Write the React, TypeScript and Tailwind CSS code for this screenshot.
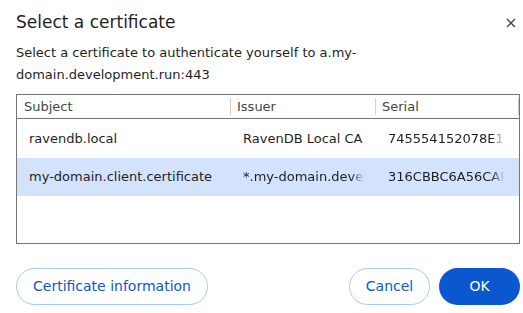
import React from 'react';

const rows = [
  { subject: 'ravendb.local', issuer: 'RavenDB Local CA', serial: '745554152078E19A', selected: false, clipIssuer: false },
  { subject: 'my-domain.client.certificate', issuer: '*.my-domain.development.run', serial: '316CBBC6A56CAF21', selected: true, clipIssuer: true },
];

const fade = 'linear-gradient(to right, black calc(100% - 14px), transparent)';

const App: React.FC = () => {
  return (
    <div className="w-[523px] h-[313px] bg-white text-[#1f1f1f] font-['DejaVu_Sans',sans-serif] overflow-hidden pl-4 pr-[3px]">
      {/* Title */}
      <div className="flex items-start justify-between pt-[10px]">
        <h1 className="text-[17px] leading-6">Select a certificate</h1>
        <svg width="10" height="10" viewBox="0 0 10 10" className="mt-[8px] mr-[4px]">
          <path d="M1 1 L9 9 M9 1 L1 9" stroke="#474747" strokeWidth="1.4" />
        </svg>
      </div>

      {/* Description */}
      <p className="pt-[8px] text-[13px] leading-[22px] text-[#1f1f1f] w-[364px]">
        Select a certificate to authenticate yourself to a.my-domain.development.run:443
      </p>

      {/* Table */}
      <div className="mt-[8px] h-[150px] border border-[#757575] text-[13px] overflow-hidden">
        <div className="flex h-[24px] items-center border-b border-[#757575] text-[#444746]">
          <div className="w-[214px] pl-[7px] border-r border-[#d0d0d0] h-[17px] leading-[17px]">Subject</div>
          <div className="w-[145px] pl-[6px] border-r border-[#d0d0d0] h-[17px] leading-[17px]">Issuer</div>
          <div className="flex-1 pl-[6px] border-r border-[#c4c4c4] h-[17px] leading-[17px]">Serial</div>
        </div>
        {rows.map((r, i) => (
          <div
            key={r.subject}
            className={`flex items-center ${i === 0 ? 'h-[39px]' : 'h-[38px]'} ${r.selected ? 'bg-[#d3e3fd]' : ''}`}
          >
            <div className="w-[214px] pl-[12px] whitespace-nowrap overflow-hidden">{r.subject}</div>
            <div className="w-[145px] pl-[12px]">
              <div
                className="w-[122px] whitespace-nowrap overflow-hidden"
                style={r.clipIssuer ? { maskImage: fade, WebkitMaskImage: fade } : undefined}
              >
                {r.issuer}
              </div>
            </div>
            <div className="flex-1 pl-[12px]">
              <div
                className="w-[117px] whitespace-nowrap overflow-hidden"
                style={{ maskImage: fade, WebkitMaskImage: fade }}
              >
                {r.serial}
              </div>
            </div>
          </div>
        ))}
      </div>

      {/* Buttons */}
      <div className="flex items-center justify-between pt-[24px]">
        <button className="h-[37px] px-[16px] rounded-full border border-[#a8c7fa] text-[#0b57d0] text-[14px]">
          Certificate information
        </button>
        <div className="flex items-center gap-[9px]">
          <button className="h-[37px] w-[81px] rounded-full border border-[#a8c7fa] text-[#0b57d0] text-[14px]">
            Cancel
          </button>
          <button className="h-[37px] w-[81px] rounded-full bg-[#0b57d0] text-white text-[14px]">
            OK
          </button>
        </div>
      </div>
    </div>
  );
};

export default App;
